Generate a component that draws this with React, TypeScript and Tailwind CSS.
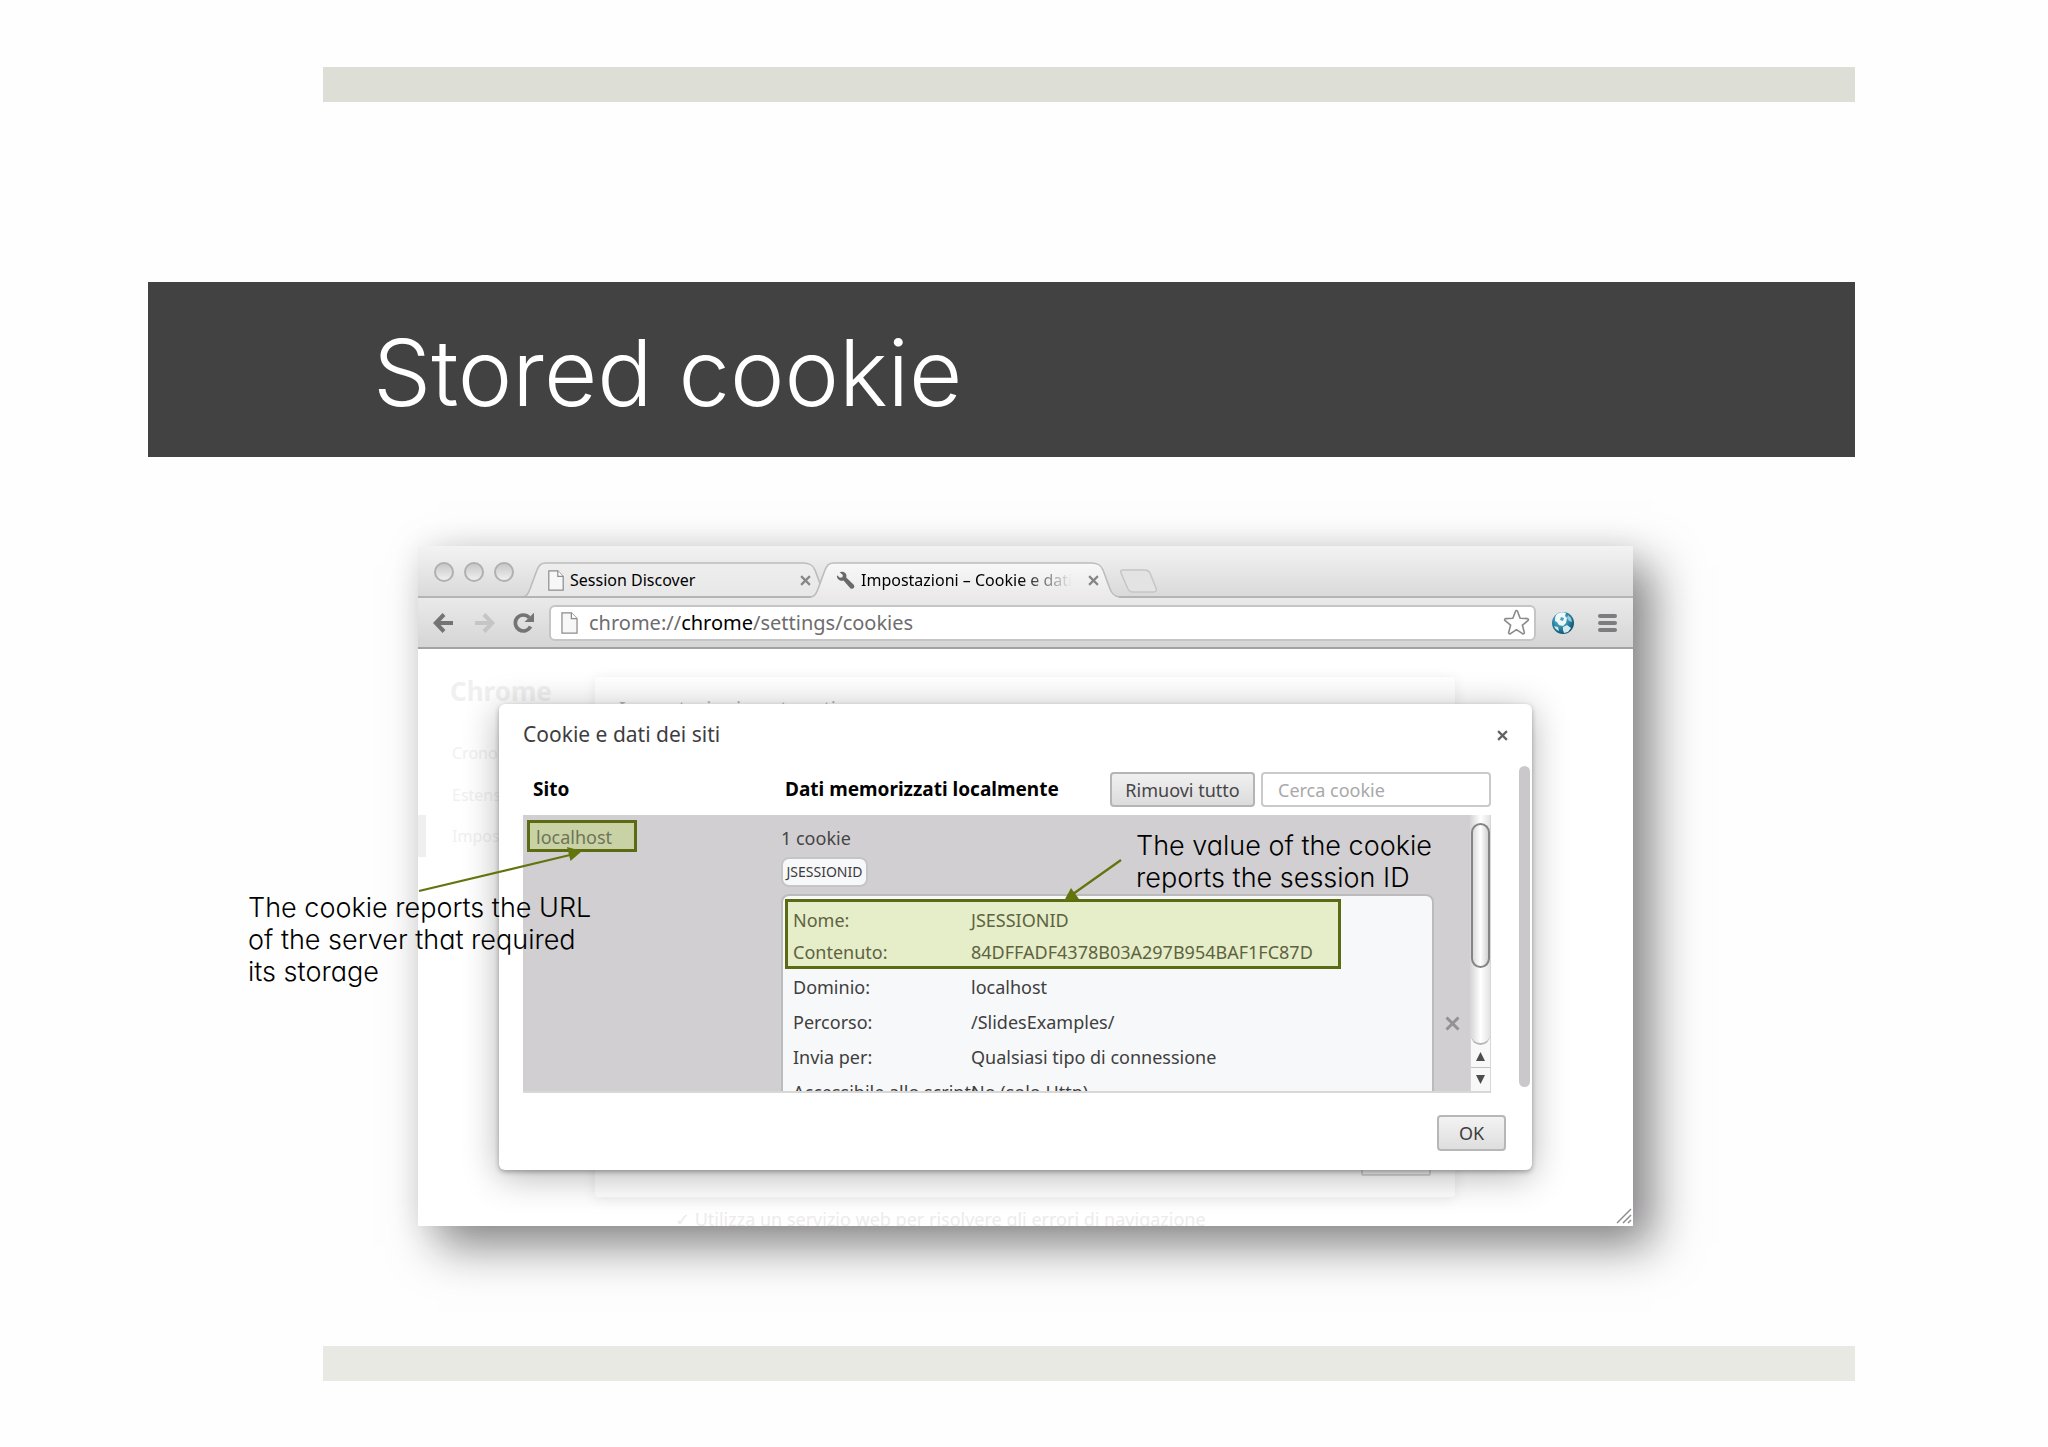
import { ReactNode } from "react";
import { clsx } from "clsx";

const cookieFields = [
  { label: "Nome:", value: "JSESSIONID", marked: true },
  { label: "Contenuto:", value: "84DFFADF4378B03A297B954BAF1FC87D", marked: true },
  { label: "Dominio:", value: "localhost" },
  { label: "Percorso:", value: "/SlidesExamples/" },
  { label: "Invia per:", value: "Qualsiasi tipo di connessione" },
  { label: "Accessibile allo script:", value: "No (solo Http)" },
];

const CrossIcon = ({ size = 11, className }: { size?: number; className?: string }) => (
  <svg
    width={size}
    height={size}
    viewBox="0 0 10 10"
    fill="none"
    stroke="currentColor"
    strokeWidth="2"
    className={className}
  >
    <path d="M1 1l8 8M9 1l-8 8" />
  </svg>
);

const PageIcon = ({ width, height }: { width: number; height: number }) => (
  <svg width={width} height={height} viewBox="0 0 16 21" className="shrink-0">
    <path d="M.8.8h9l5.4 5.6v13.8H.8z" fill="#f7f7f7" stroke="#8d8c8d" strokeWidth="1.2" />
    <path d="M9.8.8v5.6h5.4" fill="#fff" stroke="#8d8c8d" strokeWidth="1.2" />
  </svg>
);

const WrenchIcon = () => (
  <svg width="19" height="19" viewBox="0 0 19 19" className="shrink-0">
    <path
      d="M3.6 1.2C5.800.3 8.200.6 9.500 2.300c1 1.300 1.200 2.900.7 4.300l7.300 6.900c1.100 1.100 1.100 2.600.2 3.600-1 1-2.600.9-3.600-.2L7.500 9.500c-1.700.6-3.700.3-5-1C1.200 7.300.7 5.800 1 4.300l3 2.500 2.400-.5.5-2.400z"
      fill="#69686a"
    />
  </svg>
);

const TabShape = ({ active }: { active?: boolean }) => (
  <svg width="308" height="36" viewBox="0 0 308 36" className="absolute bottom-0 left-0">
    <path
      d="M0 35C4 34 5 32 7 27L14 8C16 3 18 1 23 1H280C287 1 290 3 292 8L299 27C301 32 303 34 308 35V36H0z"
      fill={active ? "url(#tabOn)" : "url(#tabOff)"}
    />
    <path
      d="M0 35C4 34 5 32 7 27L14 8C16 3 18 1 23 1H280C287 1 290 3 292 8L299 27C301 32 303 34 308 35"
      fill="none"
      stroke="#bdbcbd"
      strokeWidth="1.6"
    />
    {!active && <path d="M0 35H308" stroke="#b5b4b5" strokeWidth="2" />}
    <defs>
      <linearGradient id="tabOn" x1="0" y1="0" x2="0" y2="1">
        <stop offset="0" stopColor="#f8f8f8" />
        <stop offset="1" stopColor="#ebe9ea" />
      </linearGradient>
      <linearGradient id="tabOff" x1="0" y1="0" x2="0" y2="1">
        <stop offset="0" stopColor="#eeeeee" />
        <stop offset="1" stopColor="#e8e7e8" />
      </linearGradient>
    </defs>
  </svg>
);

const Tab = ({
  title,
  icon,
  active,
}: {
  title: ReactNode;
  icon: ReactNode;
  active?: boolean;
}) => (
  <div className={clsx("relative h-9 w-[308px] shrink-0", active && "z-10 -ml-5")}>
    <TabShape active={active} />
    <div className="relative flex h-9 items-center gap-1.5 pl-[25px] pr-5">
      {icon}
      <span className="flex-1 overflow-hidden whitespace-nowrap text-base text-black">{title}</span>
      <button type="button" aria-label="Close tab" className="text-[#868587]">
        <CrossIcon />
      </button>
    </div>
  </div>
);

const TabStrip = () => (
  <div className="flex h-[52px] items-end border-b-2 border-[#b5b4b5] bg-linear-to-b from-[#f3f3f3] to-[#dadada] pl-4">
    <div className="flex gap-2.5 pb-[14px]">
      {["Close", "Minimize", "Zoom"].map((name) => (
        <button
          key={name}
          type="button"
          aria-label={name}
          className="size-5 rounded-full border-2 border-[#b1b0b1] bg-linear-to-b from-[#c9c8c9] to-[#efefef]"
        />
      ))}
    </div>
    <div className="-mb-0.5 ml-[9px] flex items-end">
      <Tab title="Session Discover" icon={<PageIcon width={16} height={21} />} />
      <Tab
        active
        title={
          <span className="bg-linear-to-r from-black from-75% to-transparent bg-clip-text text-transparent">
            Impostazioni – Cookie e dati
          </span>
        }
        icon={<WrenchIcon />}
      />
      <button type="button" aria-label="New tab" className="mb-1">
        <svg width="40" height="26" viewBox="0 0 40 26" fill="#e4e3e4" stroke="#c6c5c6" strokeWidth="1.500">
          <path d="M4 2h22c3 0 4 1 5 3l6 15c1 2 0 4-2 4H14c-3 0-4-1-5-3L2 5C1 3 2 2 4 2z" />
        </svg>
      </button>
    </div>
  </div>
);

const Toolbar = () => (
  <div className="flex h-[51px] items-center border-b-2 border-[#a3a2a3] bg-linear-to-b from-[#ebeaeb] to-[#d6d5d6] pl-[15px] pr-4 text-[#747375]">
    <button type="button" aria-label="Back">
      <svg width="21" height="20" viewBox="0 0 21 20" fill="none" stroke="currentColor" strokeWidth="4">
        <path d="M11 1.500L2.800 10l8.200 8.500M3 10h17" />
      </svg>
    </button>
    <button type="button" aria-label="Forward" className="ml-5 text-[#c6c5c6]">
      <svg width="21" height="20" viewBox="0 0 21 20" fill="none" stroke="currentColor" strokeWidth="4">
        <path d="M10 1.500l8.200 8.500-8.200 8.500M18 10H1" />
      </svg>
    </button>
    <button type="button" aria-label="Reload" className="ml-[17px]">
      <svg width="24" height="22" viewBox="0 0 24 22">
        <path d="M18.500 14.500A8 8 0 1 1 17.200 5.500" fill="none" stroke="currentColor" strokeWidth="3.600" />
        <path d="M22 .8V10h-9.500z" fill="currentColor" />
      </svg>
    </button>
    <div className="ml-[13px] flex h-9 flex-1 items-center rounded-md border-2 border-[#c6c5c6] bg-white pl-2.5 pr-1">
      <PageIcon width={17} height={22} />
      <a href="#cookies" className="ml-[11px] flex-1 text-xl leading-6 text-[#6d6c6e]">
        chrome://<span className="text-black">chrome</span>/settings/cookies
      </a>
      <button type="button" aria-label="Bookmark">
        <svg width="27" height="27" viewBox="0 0 27 27" fill="#fff" stroke="#8a898b" strokeWidth="1.600" strokeLinejoin="round">
          <path d="M12.500 2.300c.4-1 1.600-1 2 0l2.600 6.900 7.200.4c1.200.1 1.500 1.300.6 2l-5.500 4.600 1.900 7.200c.3 1.100-.8 1.900-1.800 1.300l-6-4-6 4c-1 .6-2.100-.2-1.800-1.300l1.900-7.200-5.500-4.600c-.9-.7-.6-1.900.6-2l7.200-.4z" />
        </svg>
      </button>
    </div>
    <button type="button" aria-label="Extension" className="ml-[15px]">
      <svg width="24" height="24" viewBox="0 0 24 24">
        <defs>
          <radialGradient id="globe" cx="0.400" cy="0.350" r="0.700">
            <stop offset="0" stopColor="#7fc3da" />
            <stop offset="0.600" stopColor="#24809f" />
            <stop offset="1" stopColor="#0d4a66" />
          </radialGradient>
        </defs>
        <circle cx="12" cy="12" r="11" fill="url(#globe)" />
        <path d="M6 3c3-2 7-2 9-1l-1 3 2 2-1 5-3 3-4-1-2-3-2-1c0-3 0-5 2-7z" fill="#eef7f9" />
        <path d="M10 6l3 1-1 3-3-1z" fill="#4aa0bc" />
        <path d="M3 15l4 1 1 4c-3-1-4-3-5-5zM12 16l4-2 4 3-3 4-4 1-1-3z" fill="#d5e9ee" />
        <path d="M17 4l3 3 1 4-3-1-2-3z" fill="#9ccbd9" />
      </svg>
    </button>
    <button type="button" aria-label="Menu" className="ml-[23px] flex flex-col gap-[3px]">
      <span className="h-1 w-[19px] rounded-xs bg-[#7d7c7e]" />
      <span className="h-1 w-[19px] rounded-xs bg-[#7d7c7e]" />
      <span className="h-1 w-[19px] rounded-xs bg-[#7d7c7e]" />
    </button>
  </div>
);

// Settings page, almost washed out behind the dialog
const SettingsBackdrop = () => (
  <div aria-hidden="true" className="absolute inset-0 overflow-hidden text-[#f1f0f1]">
    <div className="flex h-full">
      <div className="w-[177px] shrink-0 pt-6">
        <p className="pl-8 text-[26px] font-bold leading-9">Chrome</p>
        <p className="mt-8 pl-[34px] text-base leading-6">Cronologia</p>
        <p className="mt-[18px] pl-[34px] text-base leading-6">Estensioni</p>
        <p className="mt-2 border-l-8 border-[#f0eff0] pl-[26px] text-base leading-[42px]">Impostazioni</p>
      </div>
      <div className="flex-1 pr-[178px] pt-7">
        <div className="flex h-[520px] flex-col justify-between rounded-sm bg-white px-6 pt-[18px] shadow-[0_2px_14px_rgba(0,0,0,0.080)]">
          <p className="text-xl leading-7 text-[#b9b8b9]">Impostazioni contenuti</p>
          <div className="mb-[21px] h-9 w-[70px] self-end rounded-xs border-2 border-[#dddcdd]" />
        </div>
        <p className="pl-20 pt-2 text-lg leading-7 text-[#ecebec]">
          ✓ Utilizza un servizio web per risolvere gli errori di navigazione
        </p>
      </div>
    </div>
  </div>
);

const Scrollbar = () => (
  <div className="flex w-[21px] shrink-0 flex-col border-x border-[#d8d7d8] bg-[#f8f8f8]">
    <div className="flex-1 rounded-b-full border-b-2 border-[#b5b4b5] bg-linear-to-r from-[#d9d8d9] via-white to-[#e4e3e4] pt-2">
      <div className="h-[145px] rounded-full border-2 border-[#858486] bg-linear-to-r from-[#dcdbdc] via-white to-[#d2d1d2]" />
    </div>
    <button type="button" aria-label="Scroll up" className="flex h-[23px] items-center justify-center border-b border-[#c2c1c2]">
      <svg width="9" height="9" viewBox="0 0 9 9" fill="#4d4c4e">
        <path d="M4.500 0L9 9H0z" />
      </svg>
    </button>
    <button type="button" aria-label="Scroll down" className="flex h-[23px] items-center justify-center">
      <svg width="9" height="9" viewBox="0 0 9 9" fill="#4d4c4e">
        <path d="M4.500 9L0 0h9z" />
      </svg>
    </button>
  </div>
);

const CookieList = () => (
  <div className="flex h-[278px] overflow-hidden border-b-2 border-[#d9d8d9] bg-[#d1cfd1]">
    <div className="w-[258px] shrink-0 pl-1 pt-[5px]">
      <p className="flex h-8 w-[110px] items-center border-3 border-[#5c6b13] bg-[#c9d2a5] pl-1.5 pt-0.5 text-lg text-[#6f7457]">
        localhost
      </p>
    </div>
    <div className="min-w-0 flex-1 pt-[9px]">
      <p className="text-lg leading-7 text-[#454446]">1 cookie</p>
      <button
        type="button"
        className="mt-[5px] block h-[30px] w-[87px] rounded-lg border-2 border-[#c6c5c6] bg-[#f7f8f9] text-sm leading-6 text-[#3c3b3d]"
      >
        JSESSIONID
      </button>
      <div className="mt-[7px] h-60 rounded-lg border-2 border-[#bcbbbc] bg-[#f6f8f9] px-0.5 pt-[3px]">
        <table className="w-full table-fixed border-separate border-spacing-0 text-lg text-[#3f3e40]">
          <colgroup>
            <col className="w-[186px]" />
            <col className="w-[370px]" />
            <col />
          </colgroup>
          <tbody>
            {cookieFields.map(({ label, value, marked }, i) => (
              <tr key={label} className={clsx("h-[35px]", marked && "text-[#5d6340]")}>
                <th
                  scope="row"
                  className={clsx(
                    "whitespace-nowrap border-[#5c6b13] text-left font-normal leading-7",
                    marked ? "border-l-3 bg-[#e6edc9] pl-[5px] pt-1" : "pl-2",
                    i === 0 && "border-t-3",
                    i === 1 && "border-b-3"
                  )}
                >
                  {label}
                </th>
                <td
                  className={clsx(
                    "whitespace-nowrap border-[#5c6b13] leading-7",
                    marked && "border-r-3 bg-[#e6edc9] pt-1",
                    i === 0 && "border-t-3",
                    i === 1 && "border-b-3"
                  )}
                >
                  {value}
                </td>
                <td />
              </tr>
            ))}
          </tbody>
        </table>
      </div>
    </div>
    <div className="flex w-9 shrink-0 justify-center pt-[200px]">
      <button type="button" aria-label="Remove cookie" className="h-4 text-[#929193]">
        <CrossIcon size={15} />
      </button>
    </div>
    <Scrollbar />
  </div>
);

const CookieDialog = () => (
  <div
    role="dialog"
    aria-labelledby="dialog-title"
    className="relative rounded-md bg-white pb-[19px] pl-6 shadow-[0_6px_36px_rgba(0,0,0,0.300),0_2px_5px_rgba(0,0,0,0.300)]"
  >
    <div className="flex h-[62px] items-center justify-between pr-6">
      <h2 id="dialog-title" className="pb-0.5 text-[21px] leading-7 text-[#3e3d3f]">
        Cookie e dati dei siti
      </h2>
      <button type="button" aria-label="Close" className="text-[#626163]">
        <CrossIcon />
      </button>
    </div>
    <div className="flex justify-between pr-0.5">
      <div className="min-w-0 flex-1 pr-7 pt-1.5">
        <div className="flex h-[43px] items-start text-lg">
          <h3 className="w-[262px] shrink-0 pl-2.5 text-[19px] font-bold leading-[34px]">Sito</h3>
          <h3 className="flex-1 whitespace-nowrap text-[19px] font-bold leading-[34px]">
            Dati memorizzati localmente
          </h3>
          <button
            type="button"
            className="h-[35px] w-[145px] rounded-sm border-2 border-[#b6b5b6] bg-linear-to-b from-[#f1f0f1] to-[#dddcdd] text-[#454446]"
          >
            Rimuovi tutto
          </button>
          <input
            type="search"
            aria-label="Cerca cookie"
            placeholder="Cerca cookie"
            className="ml-1.5 h-[35px] w-[230px] rounded-sm border-2 border-[#cbcacb] bg-white px-[15px] placeholder:text-[#a9a8a9]"
          />
        </div>
        <CookieList />
      </div>
      <div className="h-[321px] w-[11px] shrink-0 rounded-full bg-[#cac8cb]" />
    </div>
    <div className="mt-[22px] flex justify-end pr-[26px]">
      <button
        type="button"
        className="h-9 w-[69px] rounded-sm border-2 border-[#b8b7b8] bg-linear-to-b from-[#f3f3f3] to-[#dededf] text-lg text-[#3e3d3f]"
      >
        OK
      </button>
    </div>
  </div>
);

const BrowserWindow = () => (
  <div className="bg-white font-['Noto_Sans',sans-serif] shadow-[20px_20px_44px_rgba(20,16,20,0.500),0_0_30px_rgba(0,0,0,0.060)]">
    <TabStrip />
    <Toolbar />
    <div className="relative pb-14 pl-[81px] pr-[101px] pt-[55px]">
      <SettingsBackdrop />
      <CookieDialog />
      <svg
        width="16"
        height="16"
        viewBox="0 0 16 16"
        stroke="#8f8e90"
        strokeWidth="1.500"
        className="absolute bottom-0.5 right-px"
      >
        <path d="M1 15L15 1M7 15l8-8M12 15l3-3" />
      </svg>
    </div>
  </div>
);

// Slide callouts and their arrows, drawn over the window
const Callouts = () => (
  <div className="pointer-events-none absolute inset-0 text-[27px] leading-8 text-black">
    <p className="absolute -left-[170px] top-[346px] whitespace-nowrap">
      The cookie reports the URL
      <br />
      of the server that required
      <br />
      its storage
    </p>
    <p className="absolute left-[718px] top-[284px] whitespace-nowrap">
      The value of the cookie
      <br />
      reports the session ID
    </p>
    <svg width="168" height="48" viewBox="0 0 168 48" className="absolute left-0 top-[300px]">
      <path d="M1 45L152 9" stroke="#62750d" strokeWidth="2.200" />
      <path d="M164 5L149 1l3.500 14z" fill="#62750d" />
    </svg>
    <svg width="60" height="48" viewBox="0 0 60 48" className="absolute left-[645px] top-[312px]">
      <path d="M58 2L10 36" stroke="#62750d" strokeWidth="2.200" />
      <path d="M1 43L8 30l8 11z" fill="#62750d" />
    </svg>
  </div>
);

const App = () => {
  return (
    <main className="flex min-h-screen flex-col bg-[#fefefe] pb-[66px] pt-[67px] font-['Inter',sans-serif] font-light [font-feature-settings:'cv11']">
      <div className="ml-[323px] mr-[193px] h-[35px] bg-[#dddfd6]" />
      <header className="ml-[148px] mr-[193px] mt-[180px] flex h-[175px] items-center bg-[#424242] pl-[225px] pt-1.5">
        <h1 className="whitespace-nowrap text-[92px] leading-none text-white">Stored cookie</h1>
      </header>
      <section className="relative ml-[418px] mr-[415px] mt-[89px]">
        <div className="font-normal">
          <BrowserWindow />
        </div>
        <Callouts />
      </section>
      <div className="ml-[323px] mr-[193px] mt-[120px] h-[35px] bg-[#e8e9e3]" />
    </main>
  );
};

export default App;
